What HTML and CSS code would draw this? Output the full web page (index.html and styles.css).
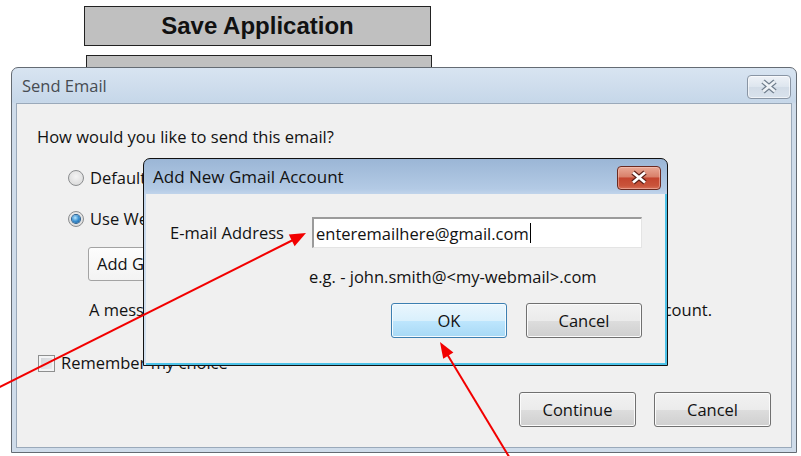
FILE: index.html
```html
<!DOCTYPE html>
<html lang="en">
<head>
<meta charset="utf-8">
<title>Send Email</title>
<link rel="stylesheet" href="styles.css">
</head>
<body>
<div class="desk">
  <div class="toolbar">
    <div class="app-btn">Save Application</div>
    <div class="app-btn app-btn-next"></div>
  </div>

  <section class="win win-send">
    <header class="win-title">
      <span class="win-caption caption-dim">Send Email</span>
      <span class="close close-idle">
        <svg width="42" height="22" viewBox="0 0 42 22">
          <path d="M15 5.5L27 15.5M27 5.5L15 15.5" stroke="#6f7d8c" stroke-width="5" fill="none"/>
          <path d="M15 5.5L27 15.5M27 5.5L15 15.5" stroke="#eef2f6" stroke-width="2.8" fill="none"/>
        </svg>
      </span>
    </header>
    <div class="win-body send-body">
      <p class="question">How would you like to send this email?</p>
      <label class="opt"><span class="radio"></span>Default email program</label>
      <label class="opt"><span class="radio radio-on"></span>Use Webmail</label>
      <div class="combo">Add Gmail Account...</div>
      <p class="note"><span>A message will be</span> <span>sent from your webmail account.</span></p>
      <label class="check-row"><span class="check"></span>Remember my choice</label>
      <div class="actions">
        <button class="btn">Continue</button>
        <button class="btn">Cancel</button>
      </div>
    </div>
  </section>

  <section class="win win-gmail">
    <header class="win-title gmail-title">
      <span class="win-caption">Add New Gmail Account</span>
      <span class="close close-red">
        <svg width="42" height="22" viewBox="0 0 42 22">
          <path d="M15 5.5L27 15.5M27 5.5L15 15.5" stroke="#5a1f17" stroke-width="5" fill="none"/>
          <path d="M15 5.5L27 15.5M27 5.5L15 15.5" stroke="#ffffff" stroke-width="2.8" fill="none"/>
        </svg>
      </span>
    </header>
    <div class="win-body gmail-body">
      <div class="field-row">
        <span class="field-label">E-mail Address</span>
        <div class="textbox">enteremailhere@gmail.com<span class="caret"></span></div>
      </div>
      <p class="hint">e.g. - john.smith@&lt;my-webmail&gt;.com</p>
      <div class="actions gmail-actions">
        <button class="btn btn-default">OK</button>
        <button class="btn">Cancel</button>
      </div>
    </div>
  </section>

  <!-- red callout arrows drawn over the dialogs -->
  <svg class="arrows" width="801" height="456" viewBox="0 0 801 456">
    <path d="M-4 389L293 240" stroke="#f20000" stroke-width="2" fill="none"/>
    <path d="M306 233L294.6 246.2L288.8 234.6Z" fill="#f20000"/>
    <path d="M447 354L511 460" stroke="#f20000" stroke-width="2" fill="none"/>
    <path d="M440 342L453.4 352.6L443.2 358.8Z" fill="#f20000"/>
  </svg>
</div>
</body>
</html>
```

FILE: styles.css
```css
* {
  box-sizing: border-box;
}

html, body {
  margin: 0;
  padding: 0;
  background: #ffffff;
}

.desk {
  position: relative;
  width: 801px;
  height: 456px;
  overflow: hidden;
  font-family: "Open Sans", "Noto Sans", sans-serif;
  font-size: 16.5px;
  color: #121212;
}

/* page toolbar behind the dialogs */
.toolbar {
  padding: 6px 0 0 84px;
}

.app-btn {
  width: 347px;
  height: 40px;
  border: 1px solid #222222;
  background: #c0c0c0;
  display: flex;
  align-items: center;
  justify-content: center;
  font-family: "Liberation Sans", Arial, sans-serif;
  font-weight: bold;
  font-size: 24px;
  color: #111111;
}

.app-btn-next {
  margin: 9px 0 0 2px;
  width: 346px;
  height: 30px;
}

/* window chrome */
.win {
  position: absolute;
  border-radius: 7px 7px 0 0;
  display: flex;
  flex-direction: column;
}

.win-title {
  height: 35px;
  flex: none;
  display: flex;
  justify-content: space-between;
  align-items: flex-start;
}

.win-caption {
  line-height: 35px;
}

.caption-dim {
  color: #474c52;
}

.close {
  margin-top: 7px;
  width: 44px;
  height: 24px;
  border-radius: 4px;
  display: flex;
  align-items: center;
  justify-content: center;
}

.close svg {
  display: block;
}

.close-idle {
  border: 1px solid #8995a4;
  background: linear-gradient(#eef2f7, #dde5ee 50%, #d2dce7 51%, #d9e2ec);
  box-shadow: inset 0 0 0 1px rgba(255, 255, 255, 0.6);
}

.close-red {
  border: 1px solid #6b2a20;
  background: linear-gradient(#e9a996, #d9806a 45%, #c4452f 50%, #c9543b 85%, #d7715a);
  box-shadow: inset 0 0 0 1px rgba(255, 210, 200, 0.45);
}

.win-body {
  flex: 1;
  background: #f0f0f0;
}

/* Send Email dialog */
.win-send {
  left: 11px;
  top: 67px;
  width: 786px;
  height: 386px;
  border: 1px solid #646b73;
  background: linear-gradient(#d8e4f1, #c6d7e9 34px, #cfdcea 36px, #cfdcea);
}

.win-send .win-title {
  padding: 0 5px 0 10px;
}

.send-body {
  margin: 0 4px 4px;
  border: 1px solid #9aa9ba;
}

.question {
  margin: 23px 0 0 20px;
  line-height: 20px;
}

.opt {
  display: flex;
  align-items: center;
  height: 20px;
  margin: 21px 0 0 51px;
  line-height: 20px;
  white-space: nowrap;
}

.radio {
  width: 16px;
  height: 16px;
  flex: none;
  margin-right: 6px;
  border-radius: 50%;
  border: 1px solid #8b8d8f;
  background: radial-gradient(circle at 50% 40%, #f4f4f4, #dedede 70%, #cfcfcf);
  display: flex;
  align-items: center;
  justify-content: center;
}

.radio-on::after {
  content: "";
  width: 8px;
  height: 8px;
  border-radius: 50%;
  background: radial-gradient(circle at 40% 35%, #b6e6ff, #3a8fd0 50%, #135592);
  box-shadow: 0 0 0 1px #2a5d8c;
}

.combo {
  margin: 18px 0 0 71px;
  width: 220px;
  height: 34px;
  padding-left: 8px;
  border: 1px solid #a3a3a3;
  border-radius: 3px;
  background: linear-gradient(#fdfdfd, #f3f3f3);
  line-height: 32px;
  white-space: nowrap;
  overflow: hidden;
}

.note {
  margin: 19px 0 0 72px;
  width: 623px;
  line-height: 20px;
  display: flex;
  justify-content: space-between;
  white-space: nowrap;
}

.check-row {
  display: flex;
  align-items: center;
  height: 20px;
  margin: 33px 0 0 21px;
  line-height: 20px;
}

.check {
  width: 17px;
  height: 17px;
  flex: none;
  margin-right: 6px;
  border: 1px solid #8e8f8f;
  background: linear-gradient(135deg, #cfd2d6, #eef0f2);
  box-shadow: inset 0 0 0 2px #f3f4f5;
}

.actions {
  display: flex;
  justify-content: flex-end;
  gap: 18px;
  margin-top: 19px;
  padding-right: 20px;
}

.btn {
  width: 117px;
  height: 35px;
  padding: 0;
  font: inherit;
  color: #121212;
  border: 1px solid #707070;
  border-radius: 3px;
  background: linear-gradient(#f2f2f2, #ebebeb 50%, #dddddd 51%, #cfcfcf);
  box-shadow: inset 0 0 0 1px #fbfbfb;
}

.btn-default {
  border-color: #3c7fb1;
  background: linear-gradient(#eaf6fd, #d9f0fc 50%, #bee6fd 51%, #a7d9f5);
  box-shadow: inset 0 0 0 1px #f4fbff;
}

/* Add New Gmail Account dialog */
.win-gmail {
  left: 143px;
  top: 158px;
  width: 525px;
  height: 208px;
  border: 1px solid #111111;
  background: linear-gradient(#9bb6d6, #b3cae5 30px, #c3d6ec 36px, #d4e2f0);
}

.gmail-title {
  padding: 0 6px 0 9px;
}

.gmail-title .win-caption {
  font-size: 17px;
}

.gmail-body {
  margin: 0 0 0 2px;
  border-right: 2px solid #4cc2e8;
  border-bottom: 2px solid #4cc2e8;
}

.field-row {
  display: grid;
  grid-template-columns: 166px 330px;
  align-items: center;
  margin-top: 23px;
}

.field-label {
  padding-left: 24px;
  white-space: nowrap;
}

.textbox {
  height: 31px;
  padding-left: 2px;
  background: #ffffff;
  border: 1px solid #e4e4e4;
  border-top: 2px solid #9b9b9b;
  border-left: 2px solid #9b9b9b;
  line-height: 27px;
  white-space: nowrap;
  display: flex;
  align-items: center;
}

.caret {
  width: 1px;
  height: 20px;
  margin-left: 1px;
  background: #000000;
}

.hint {
  margin: 19px 0 0 163px;
  line-height: 20px;
}

.gmail-actions {
  margin-top: 16px;
  gap: 19px;
  padding-right: 23px;
}

.gmail-actions .btn {
  width: 116px;
}

.arrows {
  position: absolute;
  left: 0;
  top: 0;
  pointer-events: none;
}
```
